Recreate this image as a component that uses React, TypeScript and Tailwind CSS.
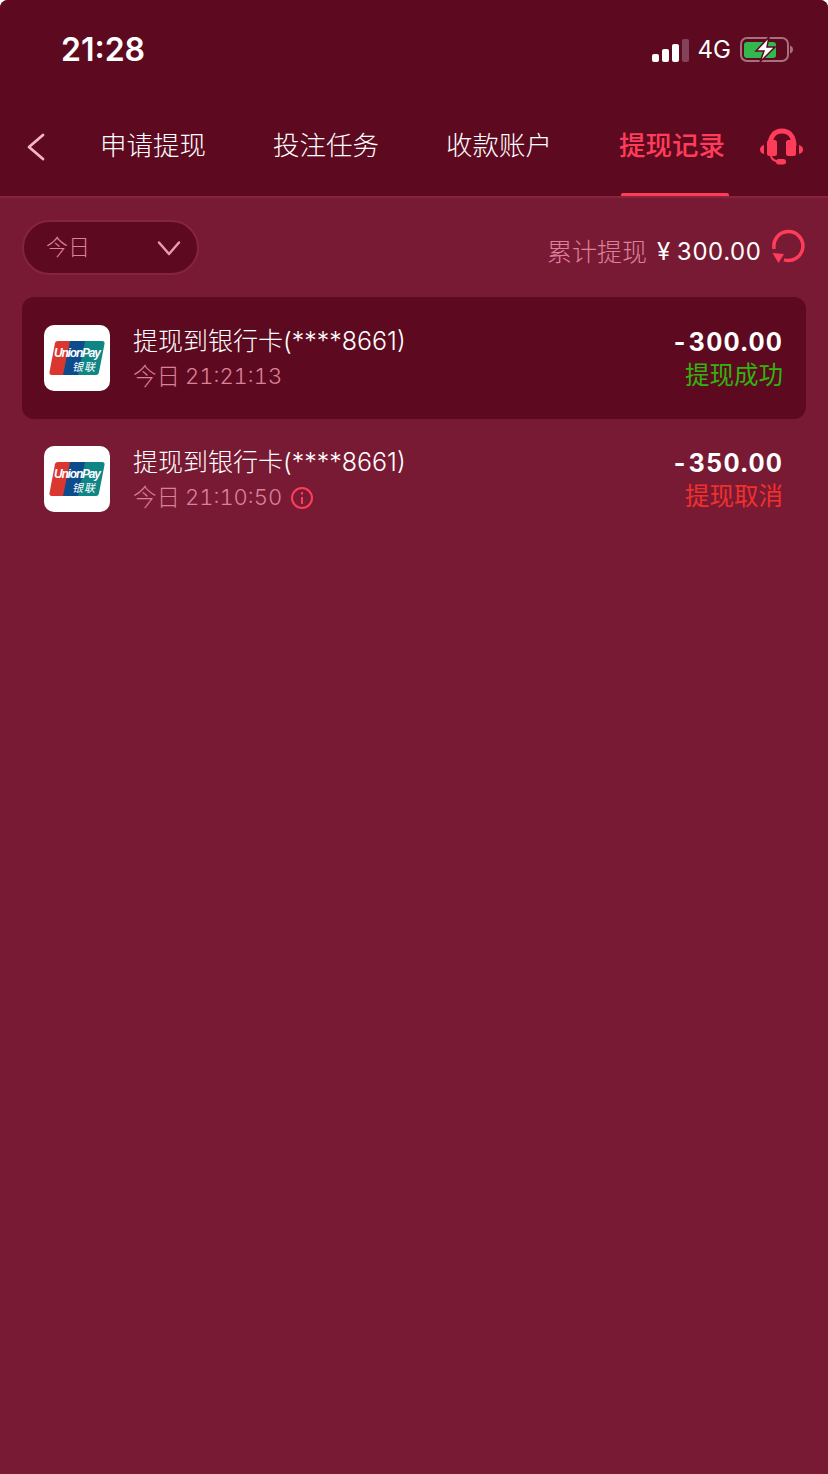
const FONT = "font-['Inter','Noto_Sans_CJK_SC',sans-serif]"

const tabs = ['申请提现', '投注任务', '收款账户', '提现记录']

const records = [
  { amount: '-300.00', clock: '21:21:13', status: '提现成功', statusColor: 'text-[#2fb50e]', active: true, info: false },
  { amount: '-350.00', clock: '21:10:50', status: '提现取消', statusColor: 'text-[#f0302c]', active: false, info: true },
]

function UnionPay() {
  return (
    <div className="w-[66px] h-[66px] rounded-[10px] bg-white flex items-center justify-center shrink-0">
      <svg width="56" height="36" viewBox="0 0 56 36">
        <path d="M9 1h17L19 35H3q-3 0-2.500-3L6 3q.4-2 3-2z" fill="#d9372f" />
        <path d="M21 1h20l-7 34H14z" fill="#0d4c8c" />
        <path d="M36 1h17q3 0 2.500 3L50 32q-.5 3-3 3H29z" fill="#0f8585" />
        <text x="5" y="17" fontSize="12" fontWeight="700" fontStyle="italic" fill="#fff" fontFamily="Liberation Sans, sans-serif" textLength="47">UnionPay</text>
        <text x="23" y="30.500" fontSize="11" fontStyle="italic" fill="#fff" fontFamily="Noto Sans CJK SC, sans-serif" textLength="23">银联</text>
      </svg>
    </div>
  )
}

function Headset() {
  return (
    <svg width="44" height="38" viewBox="0 0 44 38" fill="#ff3d5b">
      <path d="M10 18C10 8 15 3 22 3s12 5 12 15" fill="none" stroke="#ff3d5b" strokeWidth="5" />
      <rect x="7" y="12" width="10" height="16" rx="2.500" />
      <rect x="26" y="12" width="10" height="16" rx="2.500" />
      <path d="M4 17v9Q0 25 0 21.500T4 17zM39 17v9q4-1 4-4.500T39 17z" />
      <path d="M11 28q1 5 8 5.500" fill="none" stroke="#ff3d5b" strokeWidth="2" />
      <rect x="16" y="31" width="10" height="5.500" rx="2.750" />
    </svg>
  )
}

function Refresh() {
  return (
    <svg width="35" height="35" viewBox="0 0 35 35" fill="none">
      <path d="M3.200 20A14.500 14.500 0 1 1 13 30.800" stroke="#ff3d5b" strokeWidth="3.500" />
      <path d="M1.500 24 13 25l-5.500 9z" fill="#ff3d5b" />
    </svg>
  )
}

function StatusBar() {
  return (
    <div className="h-[100px] pl-[61px] pr-[34px] flex items-start justify-between">
      <span className="mt-[30px] text-[32px] leading-[40px] font-semibold text-white">21:28</span>
      <div className="mt-[36px] flex items-center">
        <div className="flex items-end gap-[3px] h-[23px]">
          <span className="w-[7px] h-[8px] rounded-[2px] bg-white" />
          <span className="w-[7px] h-[13px] rounded-[2px] bg-white" />
          <span className="w-[7px] h-[18px] rounded-[2px] bg-white" />
          <span className="w-[7px] h-[23px] rounded-[2px] bg-[#84425a]" />
        </div>
        <span className="ml-[9px] text-[24px] leading-[26px] text-white">4G</span>
        <svg className="ml-[9px]" width="54" height="28" viewBox="0 0 54 28">
          <rect x="1" y="2" width="47" height="23" rx="6" fill="none" stroke="#a6707f" strokeWidth="2" />
          <rect x="4" y="6" width="32" height="16" rx="3" fill="#33b84f" />
          <path d="M50 9.500q3 1 3 4t-3 4z" fill="#a6707f" />
          <path d="M29 1 16 15h8l-4 11 15-15h-8z" fill="#fff" stroke="#5d0a20" strokeWidth="1.500" />
        </svg>
      </div>
    </div>
  )
}

export default function App() {
  return (
    <div className={`${FONT} w-[828px] h-[1474px] bg-[#781a33] rounded-t-[8px] overflow-hidden flex flex-col`}>
      <header className="h-[198px] bg-[#5d0a20] border-b-2 border-[#86243f] shrink-0">
        <StatusBar />
        <div className="h-[96px] flex">
          <div className="w-[100px] pl-[26px] pt-[33px]">
            <svg width="20" height="28" viewBox="0 0 20 28" fill="none" stroke="#f7b4c4" strokeWidth="2.800" strokeLinecap="round" strokeLinejoin="round">
              <path d="M17 2 3 14l14 12" />
            </svg>
          </div>
          <div className="flex gap-[67px]">
            {tabs.map((tab, i) => (
              <div key={tab} className="relative w-[106px] pt-[28px]">
                <span className={`block text-[26.5px] leading-[34px] whitespace-nowrap ${i === 3 ? 'text-[#ff3d5b] font-medium' : 'text-white font-light'}`}>
                  {tab}
                </span>
                {i === 3 && <span className="absolute left-[2px] w-[108px] top-[93px] h-[3px] rounded-t-[2px] bg-[#ff3d5b]" />}
              </div>
            ))}
          </div>
          <div className="ml-[35px] pt-[28px]">
            <Headset />
          </div>
        </div>
      </header>

      <main className="px-[22px]">
        <div className="h-[99px] flex justify-between">
          <div className="mt-[22px] w-[177px] h-[55px] rounded-full bg-[#5d0a20] border-2 border-[#86243f] pl-[22px] pr-[16px] flex items-center justify-between">
            <span className="text-[22px] font-light text-[#dd809b]">今日</span>
            <svg width="24" height="16" viewBox="0 0 24 16" fill="none" stroke="#e89ab0" strokeWidth="2.500" strokeLinecap="round" strokeLinejoin="round">
              <path d="M2 2.500 12 14 22 2.500" />
            </svg>
          </div>
          <div className="mt-[31px] flex items-start">
            <span className="mt-[7px] text-[25px] leading-[32px] font-light text-[#dd809b]">累计提现</span>
            <span className="mt-[7px] ml-[10px] text-[24px] leading-[32px] text-white tabular-nums">¥ 300.00</span>
            <span className="ml-[10px]"><Refresh /></span>
          </div>
        </div>

        {records.map(r => (
          <div key={r.amount} className={`rounded-[12px] pl-[22px] pr-[23px] flex items-center ${r.active ? 'h-[122px] bg-[#5d0a20]' : 'h-[120px]'}`}>
            <UnionPay />
            <div className="ml-[23px] pt-[2px] flex-1">
              <div className="text-[25px] leading-[33px] font-light text-white">提现到银行卡(****8661)</div>
              <div className="mt-[2px] flex items-center leading-[33px] font-light text-[#dd809b]">
                <span className="text-[23.5px]">今日</span>
                <span className="ml-[5px] text-[22px] tabular-nums">{r.clock}</span>
                {r.info && (
                  <svg className="ml-[8px]" width="24" height="24" viewBox="0 0 24 24" fill="none" stroke="#ff3d5b" strokeWidth="2">
                    <circle cx="12" cy="12" r="10" />
                    <path d="M12 11v7M12 6v2.500" />
                  </svg>
                )}
              </div>
            </div>
            <div className="pt-[2px] text-right">
              <div className="text-[25px] leading-[33px] font-bold text-white tracking-[1.1px] tabular-nums">{r.amount}</div>
              <div className={`text-[24.5px] leading-[33px] ${r.statusColor}`}>{r.status}</div>
            </div>
          </div>
        ))}
      </main>
    </div>
  )
}
